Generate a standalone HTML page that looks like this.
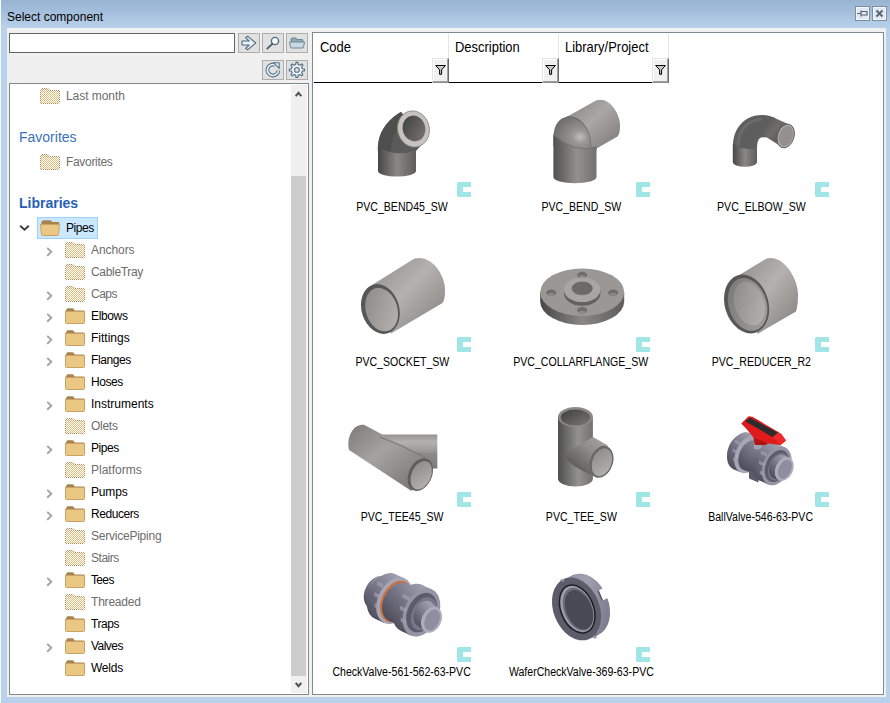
<!DOCTYPE html>
<html><head><meta charset="utf-8"><title>Select component</title>
<style>
html,body{margin:0;padding:0}
body{width:890px;height:703px;overflow:hidden;position:relative;background:#b9d1ea;font-family:"Liberation Sans",sans-serif;font-size:12px;color:#000}
.abs,.ic,.t,.h,.art,.lb,.sel{position:absolute}
#titlebar{position:absolute;left:0;top:0;width:890px;height:28px;background:linear-gradient(#99b4d1,#a3bddc 40%,#b9d1ea)}
#edgeL{position:absolute;left:0;top:0;width:1px;height:703px;background:#f6f9fd}
#title{position:absolute;left:7px;top:10px;font-size:12px;line-height:15px;white-space:nowrap}
#content{position:absolute;left:7px;top:28px;width:879px;height:669px;background:#f0f0f0}
.tb{position:absolute;width:15px;height:15px;box-sizing:border-box;border:1px solid #7d8da3;background:#dfe9f5;box-shadow:inset 0 0 0 1px #f4f8fc}
#search{position:absolute;left:9px;top:33px;width:226px;height:20px;box-sizing:border-box;border:1px solid #646464;background:#fff}
.btn{position:absolute;width:22px;height:20px;box-sizing:border-box;border:1px solid #adadad;background:#e1e1e1}
#tree{position:absolute;left:9px;top:83px;width:300px;height:612px;box-sizing:border-box;border:1px solid #828790;background:#fff}
#sb{position:absolute;left:291px;top:85px;width:16px;height:608px;background:#f0f0f0}
#thumb{position:absolute;left:291px;top:176px;width:15px;height:500px;background:#cdcdcd}
#right{position:absolute;left:312px;top:32px;width:572px;height:663px;box-sizing:border-box;border:1px solid #828790;background:#fff}
.t{font-size:12px;line-height:16px;white-space:nowrap}
.g{color:#6d6d6d}
.h{font-size:14px;line-height:20px;color:#3a72b8;white-space:nowrap}
.b{font-weight:bold;color:#2560b4}
.sel{left:37px;top:217px;width:61px;height:22px;box-sizing:border-box;border:1px solid #99d1ff;background:#cce8ff}
.hd{position:absolute;top:38px;font-size:14px;line-height:18px;white-space:nowrap;transform:scaleX(.925);transform-origin:0 50%}
.vs{position:absolute;top:34px;width:1px;height:24px;background:#e5e5e5}
.fb{position:absolute;top:58px;width:17px;height:25px;box-sizing:border-box;background:#f0f0f0;border:1px solid;border-color:#e3e3e3 #696969 #8a8a8a #e3e3e3;box-shadow:inset -1px -1px 0 #a0a0a0,inset 1px 1px 0 #fff}
.art{width:120px;height:88px}
.lb{width:200px;text-align:center;font-size:12px;line-height:16px;white-space:nowrap}
.lb span{display:inline-block;transform:scaleX(.88);transform-origin:50% 50%}
</style></head><body>
<svg width="0" height="0" style="position:absolute">
<defs>
<pattern id="dot" width="2" height="2" patternUnits="userSpaceOnUse"><rect width="2" height="2" fill="#fff"/><rect width="1" height="1" fill="#e4bf7d"/><rect x="1" y="1" width="1" height="1" fill="#e4bf7d"/></pattern>
<pattern id="dotb" width="2" height="2" patternUnits="userSpaceOnUse"><rect width="2" height="2" fill="#fff"/><rect width="1" height="1" fill="#cfa86c"/><rect x="1" y="1" width="1" height="1" fill="#cfa86c"/></pattern>
<pattern id="dotk" width="2" height="2" patternUnits="userSpaceOnUse"><rect width="2" height="2" fill="#fff"/><rect width="1" height="1" fill="#a8834f"/><rect x="1" y="1" width="1" height="1" fill="#a8834f"/></pattern>
<g id="fo"><path d="M0.5 4V3L2.300 0.300H8L9.800 2.500H18.500Q19.500 2.500 19.500 3.500V4Z" fill="#a8834f"/><path d="M0.5 3.5H19.5V14.5Q19.5 15.5 18.5 15.5H1.5Q.5 15.5 .5 14.5Z" fill="#eac782" stroke="#c9a166" stroke-width="1"/></g>
<g id="fd"><path d="M0.5 4V3L2.300 0.300H8L9.800 2.500H18.500Q19.500 2.500 19.500 3.500V4Z" fill="url(#dotb)"/><path d="M0.5 3.5H19.5V14.5Q19.5 15.5 18.5 15.5H1.5Q.5 15.5 .5 14.5Z" fill="url(#dot)"/><path d="M0.500 3L2.300 0.500H8L9.800 2.500H18.500Q19.500 2.500 19.500 3.500V14.500Q19.500 15.500 18.500 15.500H1.500Q.500 15.500 .500 14.500Z" fill="none" stroke="url(#dotk)" stroke-width="1"/></g>
<g id="fop"><path d="M1.300 4.500V2L3.200 0.300H10.400L12.500 2H18.700Q19.300 2 19.300 2.600V4.500Z" fill="#a8834f"/><path d="M0.5 4.5H19.5L18.5 14.5Q18.4 15.5 17.5 15.5H2.5Q1.6 15.5 1.5 14.5Z" fill="#eac782" stroke="#c9a166" stroke-width="1"/></g>
</defs></svg>
<div id="titlebar"></div><div id="edgeL"></div>
<div id="title">Select component</div>
<div class="tb" style="left:855px;top:6px"><svg width="13" height="13" style="position:absolute;left:0;top:0"><path d="M1 6.5H5M5 3.5V9.5M5 4.5H11V8H5" fill="none" stroke="#5a6572" stroke-width="1.2"/></svg></div>
<div class="tb" style="left:872px;top:6px"><svg width="13" height="13" style="position:absolute;left:0;top:0"><path d="M3.5 3.5L9.5 9.5M9.5 3.5L3.5 9.5" fill="none" stroke="#5a6572" stroke-width="2"/></svg></div>
<div id="content"></div>
<div id="search"></div>
<div class="btn" style="left:238px;top:33px"><svg width="20" height="18" style="position:absolute;left:0;top:0"><path d="M3 7H10.200L6.600 3.700L8.600 2.200L16.800 9L8.600 15.800L6.600 14.300L10.200 11H3Z" fill="#e9f1f7" stroke="#4a6a80" stroke-width="1.100" stroke-linejoin="round"/></svg></div>
<div class="btn" style="left:262px;top:33px"><svg width="20" height="18" style="position:absolute;left:0;top:0"><circle cx="12" cy="7" r="3.6" fill="#f4f8fb" stroke="#4f6f85" stroke-width="1.4"/><path d="M9.3 9.8L4.3 14.6" stroke="#4a5a66" stroke-width="1.8" stroke-linecap="round"/></svg></div>
<div class="btn" style="left:286px;top:33px"><svg width="20" height="18" style="position:absolute;left:0;top:0"><path d="M4 8V5Q4 4 5 4H9L10.5 5.5H15Q16 5.500 16 6.500V8" fill="#8fa7b5" stroke="#6d8797" stroke-width="1"/><path d="M2.500 8H17.500L16.500 13Q16.300 14 15.300 14H4.700Q3.700 14 3.500 13Z" fill="#c9d8e1" stroke="#6d8797" stroke-width="1"/></svg></div>
<div class="btn" style="left:262px;top:60px"><svg width="20" height="18" style="position:absolute;left:0;top:0"><path d="M15.400 9.500A5.500 5.500 0 1 1 12.200 4" fill="none" stroke="#56758a" stroke-width="3.800"/><path d="M15.400 9.500A5.500 5.500 0 1 1 12.200 4" fill="none" stroke="#e6eef4" stroke-width="1.700"/><path d="M10.800 1.800H16.200V7.400Z" fill="#e6eef4" stroke="#56758a" stroke-width="1.100" stroke-linejoin="round"/></svg></div>
<div class="btn" style="left:286px;top:60px"><svg width="20" height="18" style="position:absolute;left:0;top:0"><path d="M15.38 7.75L17.44 7.93L17.44 9.87L15.38 10.05L14.59 11.97L15.91 13.55L14.55 14.91L12.97 13.59L11.05 14.38L10.87 16.44L8.93 16.44L8.75 14.38L6.83 13.59L5.25 14.91L3.89 13.55L5.21 11.97L4.42 10.05L2.36 9.87L2.36 7.93L4.42 7.75L5.21 5.83L3.89 4.25L5.25 2.89L6.83 4.21L8.75 3.42L8.93 1.36L10.87 1.36L11.05 3.42L12.97 4.21L14.55 2.89L15.91 4.25L14.59 5.83Z" fill="#eef3f7" stroke="#4f6c80" stroke-width="1.1" stroke-linejoin="round"/><circle cx="9.9" cy="8.9" r="2.400" fill="#e1e1e1" stroke="#4f6c80" stroke-width="1.1"/></svg></div>
<div id="tree"></div>
<div id="sb"></div><div id="thumb"></div>
<svg class="ic" style="left:294px;top:90px" width="10" height="8"><path d="M1.700 6.100L4.500 2.900L7.300 6.100" fill="none" stroke="#505050" stroke-width="2.100"/></svg>
<svg class="ic" style="left:294px;top:681px" width="10" height="8"><path d="M1.700 1.900L4.500 5.100L7.300 1.900" fill="none" stroke="#505050" stroke-width="2.100"/></svg>
<svg class="ic" style="left:40px;top:88px" width="20" height="16"><use href="#fd"/></svg><span class="t g" style="left:66px;top:88px;letter-spacing:-0.05px">Last month</span>
<span class="h" style="left:19px;top:127px">Favorites</span>
<svg class="ic" style="left:40px;top:154px" width="20" height="16"><use href="#fd"/></svg><span class="t g" style="left:66px;top:154px;letter-spacing:-0.32px">Favorites</span>
<span class="h b" style="left:19px;top:193px">Libraries</span>
<div class="sel"></div>
<svg class="ic" style="left:19px;top:224px" width="11" height="8"><path d="M1.2 1.8 L5.5 5.700 L9.8 1.8" fill="none" stroke="#3c3c3c" stroke-width="1.9"/></svg>
<svg class="ic" style="left:40px;top:220px" width="20" height="16"><use href="#fop"/></svg>
<span class="t" style="left:66px;top:220px;letter-spacing:-0.42px">Pipes</span>
<svg class="ic" style="left:46px;top:246px" width="8" height="11"><path d="M1.2 1.9 L5.3 5.8 L1.2 9.7" fill="none" stroke="#a3a3a3" stroke-width="1.9"/></svg>
<svg class="ic" style="left:65px;top:242px" width="20" height="16"><use href="#fd"/></svg>
<span class="t g" style="left:91px;top:242px;letter-spacing:-0.07px">Anchors</span>
<svg class="ic" style="left:65px;top:264px" width="20" height="16"><use href="#fd"/></svg>
<span class="t g" style="left:91px;top:264px;letter-spacing:-0.32px">CableTray</span>
<svg class="ic" style="left:46px;top:290px" width="8" height="11"><path d="M1.2 1.9 L5.3 5.8 L1.2 9.7" fill="none" stroke="#a3a3a3" stroke-width="1.9"/></svg>
<svg class="ic" style="left:65px;top:286px" width="20" height="16"><use href="#fd"/></svg>
<span class="t g" style="left:91px;top:286px;letter-spacing:-0.50px">Caps</span>
<svg class="ic" style="left:46px;top:312px" width="8" height="11"><path d="M1.2 1.9 L5.3 5.8 L1.2 9.7" fill="none" stroke="#a3a3a3" stroke-width="1.9"/></svg>
<svg class="ic" style="left:65px;top:308px" width="20" height="16"><use href="#fo"/></svg>
<span class="t" style="left:91px;top:308px;letter-spacing:-0.35px">Elbows</span>
<svg class="ic" style="left:46px;top:334px" width="8" height="11"><path d="M1.2 1.9 L5.3 5.8 L1.2 9.7" fill="none" stroke="#a3a3a3" stroke-width="1.9"/></svg>
<svg class="ic" style="left:65px;top:330px" width="20" height="16"><use href="#fo"/></svg>
<span class="t" style="left:91px;top:330px">Fittings</span>
<svg class="ic" style="left:46px;top:356px" width="8" height="11"><path d="M1.2 1.9 L5.3 5.8 L1.2 9.7" fill="none" stroke="#a3a3a3" stroke-width="1.9"/></svg>
<svg class="ic" style="left:65px;top:352px" width="20" height="16"><use href="#fo"/></svg>
<span class="t" style="left:91px;top:352px;letter-spacing:-0.39px">Flanges</span>
<svg class="ic" style="left:65px;top:374px" width="20" height="16"><use href="#fo"/></svg>
<span class="t" style="left:91px;top:374px;letter-spacing:-0.42px">Hoses</span>
<svg class="ic" style="left:46px;top:400px" width="8" height="11"><path d="M1.2 1.9 L5.3 5.8 L1.2 9.7" fill="none" stroke="#a3a3a3" stroke-width="1.9"/></svg>
<svg class="ic" style="left:65px;top:396px" width="20" height="16"><use href="#fo"/></svg>
<span class="t" style="left:91px;top:396px">Instruments</span>
<svg class="ic" style="left:65px;top:418px" width="20" height="16"><use href="#fd"/></svg>
<span class="t g" style="left:91px;top:418px;letter-spacing:-0.28px">Olets</span>
<svg class="ic" style="left:46px;top:444px" width="8" height="11"><path d="M1.2 1.9 L5.3 5.8 L1.2 9.7" fill="none" stroke="#a3a3a3" stroke-width="1.9"/></svg>
<svg class="ic" style="left:65px;top:440px" width="20" height="16"><use href="#fo"/></svg>
<span class="t" style="left:91px;top:440px;letter-spacing:-0.42px">Pipes</span>
<svg class="ic" style="left:65px;top:462px" width="20" height="16"><use href="#fd"/></svg>
<span class="t g" style="left:91px;top:462px">Platforms</span>
<svg class="ic" style="left:46px;top:488px" width="8" height="11"><path d="M1.2 1.9 L5.3 5.8 L1.2 9.7" fill="none" stroke="#a3a3a3" stroke-width="1.9"/></svg>
<svg class="ic" style="left:65px;top:484px" width="20" height="16"><use href="#fo"/></svg>
<span class="t" style="left:91px;top:484px;letter-spacing:-0.16px">Pumps</span>
<svg class="ic" style="left:46px;top:510px" width="8" height="11"><path d="M1.2 1.9 L5.3 5.8 L1.2 9.7" fill="none" stroke="#a3a3a3" stroke-width="1.9"/></svg>
<svg class="ic" style="left:65px;top:506px" width="20" height="16"><use href="#fo"/></svg>
<span class="t" style="left:91px;top:506px;letter-spacing:-0.44px">Reducers</span>
<svg class="ic" style="left:65px;top:528px" width="20" height="16"><use href="#fd"/></svg>
<span class="t g" style="left:91px;top:528px;letter-spacing:-0.23px">ServicePiping</span>
<svg class="ic" style="left:65px;top:550px" width="20" height="16"><use href="#fd"/></svg>
<span class="t g" style="left:91px;top:550px;letter-spacing:-0.47px">Stairs</span>
<svg class="ic" style="left:46px;top:576px" width="8" height="11"><path d="M1.2 1.9 L5.3 5.8 L1.2 9.7" fill="none" stroke="#a3a3a3" stroke-width="1.9"/></svg>
<svg class="ic" style="left:65px;top:572px" width="20" height="16"><use href="#fo"/></svg>
<span class="t" style="left:91px;top:572px;letter-spacing:-0.65px">Tees</span>
<svg class="ic" style="left:65px;top:594px" width="20" height="16"><use href="#fd"/></svg>
<span class="t g" style="left:91px;top:594px;letter-spacing:-0.20px">Threaded</span>
<svg class="ic" style="left:65px;top:616px" width="20" height="16"><use href="#fo"/></svg>
<span class="t" style="left:91px;top:616px;letter-spacing:-0.46px">Traps</span>
<svg class="ic" style="left:46px;top:642px" width="8" height="11"><path d="M1.2 1.9 L5.3 5.8 L1.2 9.7" fill="none" stroke="#a3a3a3" stroke-width="1.9"/></svg>
<svg class="ic" style="left:65px;top:638px" width="20" height="16"><use href="#fo"/></svg>
<span class="t" style="left:91px;top:638px;letter-spacing:-0.53px">Valves</span>
<svg class="ic" style="left:65px;top:660px" width="20" height="16"><use href="#fo"/></svg>
<span class="t" style="left:91px;top:660px;letter-spacing:-0.24px">Welds</span>
<div id="right"></div>
<div class="abs" style="left:314px;top:82px;width:355px;height:1px;background:#000"></div>
<span class="hd" style="left:320px">Code</span>
<span class="hd" style="left:455px">Description</span>
<span class="hd" style="left:565px">Library/Project</span>
<div class="vs" style="left:448px"></div><div class="vs" style="left:558px"></div><div class="vs" style="left:668px"></div>
<div class="fb" style="left:432px"><svg width="15" height="23" style="position:absolute;left:0;top:0"><path d="M2.700 6.500H12.400L8.600 10.800V15.300H6.600V10.800Z" fill="#c8c8c8" stroke="#000" stroke-width="1"/></svg></div>
<div class="fb" style="left:542px"><svg width="15" height="23" style="position:absolute;left:0;top:0"><path d="M2.700 6.500H12.400L8.600 10.800V15.300H6.600V10.800Z" fill="#c8c8c8" stroke="#000" stroke-width="1"/></svg></div>
<div class="fb" style="left:652px"><svg width="15" height="23" style="position:absolute;left:0;top:0"><path d="M2.700 6.500H12.400L8.600 10.800V15.300H6.600V10.800Z" fill="#c8c8c8" stroke="#000" stroke-width="1"/></svg></div>
<svg class="abs" style="left:0;top:0" width="890" height="703" viewBox="0 0 890 703">
<defs>
<linearGradient id="cylD" x1="0" x2="1" y1="0" y2="0"><stop offset="0" stop-color="#474747"/><stop offset=".5" stop-color="#8a8785"/><stop offset="1" stop-color="#5e5d5c"/></linearGradient>
<linearGradient id="cylM" x1="0" x2="1" y1="0" y2="0"><stop offset="0" stop-color="#525150"/><stop offset=".55" stop-color="#93908d"/><stop offset="1" stop-color="#747270"/></linearGradient><linearGradient id="diagL2" x1="0" x2="1" y1="0" y2="1"><stop offset="0" stop-color="#858280"/><stop offset=".45" stop-color="#aaa7a4"/><stop offset="1" stop-color="#7a7775"/></linearGradient>
<linearGradient id="diagL" x1="0" x2="1" y1="0" y2="1"><stop offset="0" stop-color="#8f8c8a"/><stop offset=".45" stop-color="#b4b1ae"/><stop offset="1" stop-color="#7f7d7b"/></linearGradient>
<linearGradient id="diagM" x1="0" x2="1" y1="0" y2="1"><stop offset="0" stop-color="#7d7b79"/><stop offset=".4" stop-color="#a5a29f"/><stop offset="1" stop-color="#6e6c6a"/></linearGradient>
<linearGradient id="holeD" x1="0" x2="1" y1="0" y2="1"><stop offset="0" stop-color="#3e3e3e"/><stop offset="1" stop-color="#7a7876"/></linearGradient>
<linearGradient id="holeL" x1="0" x2="1" y1="0" y2="1"><stop offset="0" stop-color="#8a8785"/><stop offset="1" stop-color="#b8b5b2"/></linearGradient>
<radialGradient id="sph" cx=".62" cy=".55" r=".7"><stop offset="0" stop-color="#c2bfbc"/><stop offset=".25" stop-color="#999693"/><stop offset="1" stop-color="#686664"/></radialGradient>
<linearGradient id="bv" x1="0" x2="1" y1="0" y2="1"><stop offset="0" stop-color="#9292a2"/><stop offset=".5" stop-color="#767686"/><stop offset="1" stop-color="#565664"/></linearGradient>
<linearGradient id="bv2" x1="0" x2="0" y1="0" y2="1"><stop offset="0" stop-color="#9a9aaa"/><stop offset=".5" stop-color="#737383"/><stop offset="1" stop-color="#545461"/></linearGradient>
<linearGradient id="brH" x1="0" x2="0" y1="0" y2="1"><stop offset="0" stop-color="#969390"/><stop offset=".22" stop-color="#b4b1ae"/><stop offset=".5" stop-color="#9a9794"/><stop offset=".55" stop-color="#8d8a87"/><stop offset="1" stop-color="#7d7b78"/></linearGradient>
<linearGradient id="brT" x1="1" x2="0" y1="0" y2="1"><stop offset="0" stop-color="#a9a6a3"/><stop offset=".35" stop-color="#918e8b"/><stop offset=".8" stop-color="#595857"/><stop offset="1" stop-color="#4e4d4d"/></linearGradient>
<linearGradient id="cylDD" x1="0" x2="1" y1="0" y2="0"><stop offset="0" stop-color="#4e4e4e"/><stop offset=".58" stop-color="#94918e"/><stop offset="1" stop-color="#747270"/></linearGradient>
<linearGradient id="band" x1="0" x2="1" y1="0" y2="1"><stop offset="0" stop-color="#777573"/><stop offset="1" stop-color="#a5a29f"/></linearGradient>
</defs>
<!-- 1: PVC_BEND45_SW -->
<g>
<path d="M378 152C377 133 387 120 401 112L425 141L416 151V160H378Z" fill="#5a5a5a"/>
<path d="M378 152C377 133 387 120 401 112L408 120C396 127 390 140 391 155Z" fill="#4e4e4e"/>
<path d="M378 147Q397 158 416 150V171A19 5.600 0 0 1 378 171Z" fill="url(#cylD)"/>
<ellipse cx="413.500" cy="129" rx="15.800" ry="18.200" transform="rotate(-14 413.500 129)" fill="#c6c2be" stroke="#8a8683" stroke-width=".8"/>
<ellipse cx="414" cy="128.500" rx="11.300" ry="13" transform="rotate(-14 414 128.500)" fill="url(#holeD)"/>
</g>
<!-- 2: PVC_BEND_SW -->
<g>
<path d="M584 141L596.500 147.500V150.500L584 153Z" fill="#8d8a88"/>
<path d="M566.500 117L596 100.500C608 96 620 112 620 126C620 131 619 135 617.500 136.500L596.500 148.500L575 140Z" fill="url(#diagL2)"/>
<path d="M553.400 138C553.400 124 560 117.500 568 116.500C582 115 592 130 590.500 147L596.500 148.500V150L575 154L553.400 146Z" fill="url(#sph)"/>
<path d="M553.400 135Q575 154 596.500 147V177A21.550 6.200 0 0 1 553.400 177Z" fill="url(#cylM)"/>
<path d="M567 116.500C582 117 591.500 131 590.500 147" fill="none" stroke="#6a6866" stroke-width=".7"/>
<path d="M553.400 135Q575 154 596.500 147" fill="none" stroke="#6a6866" stroke-width=".7"/>
</g>
<!-- 3: PVC_ELBOW_SW -->
<g>
<path d="M733 146C733 128 745 115 762 115C768 115 772 116.500 775 118L766 137.500C763 137 761 137.500 760 138C757.500 140 757 144 757 149L757 152H733Z" fill="#5f5e5e"/>
<path d="M738 146C738 130 748 120 762 119" fill="none" stroke="#7a7876" stroke-width="3" opacity=".5"/>
<path d="M732.800 144Q745 151.500 757 147.500V162A12.100 4.800 0 0 1 732.800 162Z" fill="url(#cylD)"/>
<path d="M766 137C762 128 766 119 772.500 117L789 124.500L783 147.500Z" fill="url(#diagM)"/>
<path d="M766 137C762 128 766 119 772.500 117L789 124.500L783 147.500Z" fill="#000" opacity=".33"/>
<ellipse cx="785.700" cy="136" rx="8.300" ry="12.200" transform="rotate(18 785.700 136)" fill="#adaaa7" stroke="#5a5958" stroke-width=".9"/>
<ellipse cx="785.900" cy="136" rx="6.700" ry="10.400" transform="rotate(18 785.900 136)" fill="#93908d"/>
</g>
<!-- 4: PVC_SOCKET_SW -->
<g>
<path d="M380 309L372 285L414.500 258.500C432 254 446 276 445 291C445 297 444 301 442.500 303L391 333.500Z" fill="url(#diagL)"/>
<ellipse cx="380.400" cy="309" rx="18.800" ry="25.400" transform="rotate(-17 380.400 309)" fill="#585756"/>
<ellipse cx="381.600" cy="309.600" rx="15.800" ry="22.200" transform="rotate(-17 381.600 309.600)" fill="url(#holeL)"/>
</g>
<!-- 5: PVC_COLLARFLANGE_SW -->
<g>
<path d="M540.200 292.200V301.500A42 23.500 0 0 0 624.200 301.500V292.200Z" fill="url(#cylD)"/>
<ellipse cx="582.200" cy="292.200" rx="42" ry="23.800" fill="#9a9794"/>
<ellipse cx="582.200" cy="274.900" rx="5" ry="3.200" fill="#6f6d6a"/><ellipse cx="551.300" cy="292.700" rx="5" ry="3.200" fill="#6f6d6a"/><ellipse cx="613.200" cy="292.700" rx="5" ry="3.200" fill="#6f6d6a"/><ellipse cx="582.200" cy="310.300" rx="5" ry="3.200" fill="#6f6d6a"/>
<ellipse cx="582.200" cy="276.600" rx="3.200" ry="1.300" fill="#8d8a87"/><ellipse cx="551.300" cy="294.400" rx="3.200" ry="1.300" fill="#8d8a87"/><ellipse cx="613.200" cy="294.400" rx="3.200" ry="1.300" fill="#8d8a87"/><ellipse cx="582.200" cy="312" rx="3.200" ry="1.300" fill="#8d8a87"/>
<path d="M564 290V293.500A18.200 12.200 0 0 0 600.400 293.500V290Z" fill="#64625f"/>
<ellipse cx="582.200" cy="289.700" rx="18.200" ry="12.300" fill="#a8a5a2"/>
<ellipse cx="582.200" cy="288.300" rx="10.500" ry="6.900" fill="#6c6a67"/>
<path d="M572.500 290.500A10 6 0 0 0 592 290.500A10.500 6.900 0 0 1 572.500 290.500Z" fill="#8f8c89"/>
</g>
<!-- 6: PVC_REDUCER_R2 -->
<g>
<path d="M746 304L738.500 275.500L766.500 258.500C784 254 799 280 798 296C798 303 797 308 796 311.500L757.500 334Z" fill="url(#diagL)"/>
<ellipse cx="746.600" cy="304" rx="21.800" ry="30" transform="rotate(-17 746.600 304)" fill="#585756"/>
<ellipse cx="747.600" cy="304.400" rx="19" ry="27" transform="rotate(-17 747.600 304.400)" fill="url(#band)"/>
<ellipse cx="749.400" cy="303.500" rx="14.800" ry="22.400" transform="rotate(-17 749.400 303.500)" fill="url(#holeL)"/>
</g>
<!-- 7: PVC_TEE45_SW -->
<g>
<path d="M379.500 434.400H437.300V468.600H420L379.500 440Z" fill="url(#brH)"/>
<path d="M364.500 425C352 423 346 440 349 450L411.500 491L431 462L426 458Z" fill="url(#diagM)"/>
<path d="M379.700 437Q402 445 426 458" fill="none" stroke="#6e6c6a" stroke-width=".8"/>
<ellipse cx="420.300" cy="474.600" rx="11.600" ry="17" transform="rotate(24 420.300 474.600)" fill="#5e5d5c"/>
<ellipse cx="421.200" cy="475.200" rx="9.700" ry="15" transform="rotate(24 421.200 475.200)" fill="url(#holeL)"/>
</g>
<!-- 8: PVC_TEE_SW -->
<g>
<path d="M558 417V478.800A17.450 7.800 0 0 0 592.900 478.800V417Z" fill="url(#cylDD)"/>
<ellipse cx="575.450" cy="417" rx="17.450" ry="10" fill="#8c8986"/>
<ellipse cx="575.450" cy="417.600" rx="14.800" ry="8" fill="url(#holeD)"/>
<path d="M563 454.600L592.900 436.900L608 445.500L597 477L592 475Q572 468 563 454.600Z" fill="url(#brT)"/>
<ellipse cx="601.400" cy="461.800" rx="11.400" ry="16.400" transform="rotate(20 601.400 461.800)" fill="#6a6866"/>
<ellipse cx="601.900" cy="462.200" rx="9.600" ry="14.400" transform="rotate(20 601.900 462.200)" fill="url(#holeL)"/>
</g>
<!-- 9: BallValve -->
<g><linearGradient id="vg1" gradientUnits="userSpaceOnUse" x1="745.9" y1="437.0" x2="733.6" y2="463.3"><stop offset="0" stop-color="#a2a2b3"/><stop offset="0.3" stop-color="#8a8a9b"/><stop offset="0.65" stop-color="#6a6a7a"/><stop offset="1" stop-color="#4e4e5b"/></linearGradient><ellipse cx="738.0" cy="449.3" rx="9.6" ry="14.5" transform="rotate(25 738.0 449.3)" fill="url(#vg1)" /><path d="M744.1 436.2L747.6 437.9L735.4 464.1L731.9 462.4Z" fill="url(#vg1)"/><ellipse cx="741.5" cy="451.0" rx="9.6" ry="14.5" transform="rotate(25 741.5 451.0)" fill="url(#vg1)" /><linearGradient id="vg2" gradientUnits="userSpaceOnUse" x1="753.5" y1="434.8" x2="736.8" y2="470.6"><stop offset="0" stop-color="#a2a2b3"/><stop offset="0.3" stop-color="#8a8a9b"/><stop offset="0.65" stop-color="#6a6a7a"/><stop offset="1" stop-color="#4e4e5b"/></linearGradient><ellipse cx="741.5" cy="451.0" rx="13.1" ry="19.8" transform="rotate(25 741.5 451.0)" fill="url(#vg2)" /><path d="M749.9 433.1L757.2 436.5L740.4 472.3L733.1 468.9Z" fill="url(#vg2)"/><ellipse cx="748.8" cy="454.4" rx="13.1" ry="19.8" transform="rotate(25 748.8 454.4)" fill="#a6a6b7" /><path d="M734.6 439.4l5.4 2.5v3.4l-5.4 -2.5Z" fill="#a0a0b2" opacity=".7"/><path d="M732.7 448.4l5.4 2.5v3.4l-5.4 -2.5Z" fill="#a0a0b2" opacity=".7"/><path d="M733.1 457.4l5.4 2.5v3.4l-5.4 -2.5Z" fill="#a0a0b2" opacity=".7"/><linearGradient id="vg3" gradientUnits="userSpaceOnUse" x1="765.8" y1="444.1" x2="752.2" y2="473.2"><stop offset="0" stop-color="#8c8c9d"/><stop offset="0.4" stop-color="#747485"/><stop offset="1" stop-color="#4c4c59"/></linearGradient><ellipse cx="750.0" cy="455.3" rx="10.6" ry="16.0" transform="rotate(25 750.0 455.3)" fill="url(#vg3)" /><path d="M756.8 440.8L774.8 447.5L761.2 476.5L743.2 469.8Z" fill="url(#vg3)"/><ellipse cx="768.0" cy="462.0" rx="10.6" ry="16.0" transform="rotate(25 768.0 462.0)" fill="url(#vg3)" /><path d="M749 470L758.500 474V482.500L749 478.500Z" fill="#5a5a68"/><path d="M754 440H761.500V448.500Q757.700 450.500 754 448.500Z" fill="#a3a3b4"/><linearGradient id="vg4" gradientUnits="userSpaceOnUse" x1="780.8" y1="445.5" x2="763.6" y2="482.3"><stop offset="0" stop-color="#a2a2b3"/><stop offset="0.3" stop-color="#8a8a9b"/><stop offset="0.65" stop-color="#6a6a7a"/><stop offset="1" stop-color="#4e4e5b"/></linearGradient><ellipse cx="767.7" cy="461.8" rx="13.4" ry="20.3" transform="rotate(25 767.7 461.8)" fill="url(#vg4)" /><path d="M776.3 443.4L785.3 447.6L768.1 484.4L759.1 480.2Z" fill="url(#vg4)"/><ellipse cx="776.7" cy="466.0" rx="13.4" ry="20.3" transform="rotate(25 776.7 466.0)" fill="#9494a5" /><path d="M760.9 450.4l6.3 3.0v3.5l-6.3 -3.0Z" fill="#a0a0b2" opacity=".7"/><path d="M759.0 460.4l6.3 3.0v3.5l-6.3 -3.0Z" fill="#a0a0b2" opacity=".7"/><path d="M759.8 470.4l6.3 3.0v3.5l-6.3 -3.0Z" fill="#a0a0b2" opacity=".7"/><ellipse cx="776.9" cy="466.1" rx="11.1" ry="16.8" transform="rotate(25 776.9 466.1)" fill="#5b5b69" /><ellipse cx="778.5" cy="466.8" rx="9.6" ry="14.5" transform="rotate(25 778.5 466.8)" fill="#77778a" /><linearGradient id="vg5" gradientUnits="userSpaceOnUse" x1="786.6" y1="456.7" x2="776.2" y2="479.1"><stop offset="0" stop-color="#a2a2b3"/><stop offset="0.3" stop-color="#8a8a9b"/><stop offset="0.65" stop-color="#6a6a7a"/><stop offset="1" stop-color="#4e4e5b"/></linearGradient><ellipse cx="778.5" cy="466.8" rx="8.7" ry="12.4" transform="rotate(25 778.5 466.8)" fill="url(#vg5)" /><path d="M783.7 455.6L789.5 457.8L779.1 480.2L773.3 478.0Z" fill="url(#vg5)"/><ellipse cx="784.3" cy="469.0" rx="8.7" ry="12.4" transform="rotate(25 784.3 469.0)" fill="#adadbe" /><ellipse cx="784.9" cy="469.2" rx="6.2" ry="10.0" transform="rotate(25 784.9 469.2)" fill="#8e8e9f" /><path d="M741.300 423.500L748.500 416.200L752.500 416.800L776.500 431L781.200 434L786 440.500L780.500 445L768 443.500L765 445H755L753.500 437.500L746.500 429Z" fill="#e01b1b"/><path d="M755 445L753.500 437.500L768 443.500L765 445Z" fill="#b01515"/><path d="M776.500 431L781.200 434L786 440.500L780.500 445L773 437Z" fill="#ee2a2a"/><path d="M745.200 421.300L750 417.800L778 432.800L772.500 437Z" fill="#2c2c2e"/></g>
<!-- 10: CheckValve -->
<g><linearGradient id="vg6" gradientUnits="userSpaceOnUse" x1="385.9" y1="578.0" x2="371.6" y2="608.8"><stop offset="0" stop-color="#a2a2b3"/><stop offset="0.3" stop-color="#8a8a9b"/><stop offset="0.65" stop-color="#6a6a7a"/><stop offset="1" stop-color="#4e4e5b"/></linearGradient><ellipse cx="376.5" cy="592.3" rx="11.6" ry="17.0" transform="rotate(25 376.5 592.3)" fill="url(#vg6)" /><path d="M383.7 576.9L388.2 579.1L373.8 609.9L369.3 607.7Z" fill="url(#vg6)"/><ellipse cx="381.0" cy="594.5" rx="11.6" ry="17.0" transform="rotate(25 381.0 594.5)" fill="url(#vg6)" /><linearGradient id="vg7" gradientUnits="userSpaceOnUse" x1="400.1" y1="576.3" x2="379.4" y2="620.8"><stop offset="0" stop-color="#a2a2b3"/><stop offset="0.3" stop-color="#8a8a9b"/><stop offset="0.65" stop-color="#6a6a7a"/><stop offset="1" stop-color="#4e4e5b"/></linearGradient><ellipse cx="385.0" cy="596.4" rx="16.7" ry="24.5" transform="rotate(25 385.0 596.4)" fill="url(#vg7)" /><path d="M395.4 574.2L404.9 578.5L384.1 622.9L374.6 618.6Z" fill="url(#vg7)"/><ellipse cx="394.5" cy="600.7" rx="16.7" ry="24.5" transform="rotate(25 394.5 600.7)" fill="#a6a6b7" /><path d="M377.1 581.1l6.3 3.0v4.2l-6.3 -3.0Z" fill="#a0a0b2" opacity=".7"/><path d="M374.3 592.1l6.3 3.0v4.2l-6.3 -3.0Z" fill="#a0a0b2" opacity=".7"/><path d="M374.5 603.1l6.3 3.0v4.2l-6.3 -3.0Z" fill="#a0a0b2" opacity=".7"/><ellipse cx="396.2" cy="601.5" rx="14.8" ry="21.8" transform="rotate(25 396.2 601.5)" fill="#d07038" /><linearGradient id="vg8" gradientUnits="userSpaceOnUse" x1="413.9" y1="586.6" x2="396.5" y2="624.0"><stop offset="0" stop-color="#8c8c9d"/><stop offset="0.4" stop-color="#747485"/><stop offset="1" stop-color="#4c4c59"/></linearGradient><ellipse cx="397.4" cy="602.1" rx="14.0" ry="20.6" transform="rotate(25 397.4 602.1)" fill="url(#vg8)" /><path d="M406.1 583.4L421.7 589.8L404.3 627.2L388.7 620.8Z" fill="url(#vg8)"/><ellipse cx="413.0" cy="608.5" rx="14.0" ry="20.6" transform="rotate(25 413.0 608.5)" fill="url(#vg8)" /><linearGradient id="vg9" gradientUnits="userSpaceOnUse" x1="427.1" y1="587.2" x2="405.7" y2="633.1"><stop offset="0" stop-color="#a2a2b3"/><stop offset="0.3" stop-color="#8a8a9b"/><stop offset="0.65" stop-color="#6a6a7a"/><stop offset="1" stop-color="#4e4e5b"/></linearGradient><ellipse cx="411.4" cy="607.8" rx="17.2" ry="25.3" transform="rotate(25 411.4 607.8)" fill="url(#vg9)" /><path d="M422.1 584.9L432.1 589.6L410.7 635.4L400.7 630.7Z" fill="url(#vg9)"/><ellipse cx="421.4" cy="612.5" rx="17.2" ry="25.3" transform="rotate(25 421.4 612.5)" fill="#9494a5" /><path d="M402.4 593.5l7.3 3.4v4.3l-7.3 -3.4Z" fill="#a0a0b2" opacity=".7"/><path d="M400.0 605.5l7.3 3.4v4.3l-7.3 -3.4Z" fill="#a0a0b2" opacity=".7"/><path d="M400.7 617.5l7.3 3.4v4.3l-7.3 -3.4Z" fill="#a0a0b2" opacity=".7"/><ellipse cx="421.6" cy="612.6" rx="14.1" ry="20.8" transform="rotate(25 421.6 612.6)" fill="#5b5b69" /><ellipse cx="424.0" cy="613.8" rx="11.9" ry="17.5" transform="rotate(25 424.0 613.8)" fill="#77778a" /><linearGradient id="vg10" gradientUnits="userSpaceOnUse" x1="433.5" y1="604.5" x2="422.0" y2="629.1"><stop offset="0" stop-color="#a2a2b3"/><stop offset="0.3" stop-color="#8a8a9b"/><stop offset="0.65" stop-color="#6a6a7a"/><stop offset="1" stop-color="#4e4e5b"/></linearGradient><ellipse cx="424.0" cy="613.8" rx="9.8" ry="13.6" transform="rotate(25 424.0 613.8)" fill="url(#vg10)" /><path d="M429.7 601.5L437.2 607.5L425.8 632.1L418.3 626.1Z" fill="url(#vg10)"/><ellipse cx="431.5" cy="619.8" rx="9.8" ry="13.6" transform="rotate(25 431.5 619.8)" fill="#adadbe" /><ellipse cx="432.1" cy="620.0" rx="7.0" ry="11.0" transform="rotate(25 432.1 620.0)" fill="#8e8e9f" /></g>
<!-- 11: WaferCheckValve -->
<g>
<linearGradient id="rim" x1="0" x2="1" y1="0" y2="1"><stop offset="0" stop-color="#8a8a9c"/><stop offset=".45" stop-color="#a0a0b2"/><stop offset="1" stop-color="#6e6e7f"/></linearGradient>
<ellipse cx="585.500" cy="605" rx="23" ry="32.500" transform="rotate(-22 585.500 605)" fill="url(#rim)"/>
<path d="M564.300 578.900L573.300 574.900L597.800 635.100L588.800 639.100Z" fill="url(#rim)"/>
<path d="M598.500 590.500L603.500 588L607.800 598L602.500 600.500Z" fill="#fff"/>
<path d="M597.500 591L598.800 590.300L603 600.200L601.700 600.900Z" fill="#55556a"/>
<ellipse cx="576.500" cy="609" rx="23" ry="32.500" transform="rotate(-22 576.500 609)" fill="#5c5c6a"/>
<ellipse cx="562.300" cy="580.300" rx="2" ry="1.400" fill="#9a9aac"/><ellipse cx="594.700" cy="637.200" rx="2" ry="1.400" fill="#9a9aac"/>
<ellipse cx="577.200" cy="609" rx="16.300" ry="25" transform="rotate(-22 577.200 609)" fill="#9c9cad" stroke="#202024" stroke-width="1.600"/>
<ellipse cx="578.200" cy="609.200" rx="14" ry="22.300" transform="rotate(-22 578.200 609.200)" fill="#6a6a79"/>
<ellipse cx="579" cy="609.800" rx="12.800" ry="20.600" transform="rotate(-22 579 609.800)" fill="#4a4a56"/>
</g>
</svg>
<svg class="ic" style="left:457px;top:182px" width="14" height="15"><path d="M1 0H14V5H6V10H14V15H1L0 14V1Z" fill="#a0e6e6"/></svg>
<div class="lb" style="left:302px;top:199px"><span>PVC_BEND45_SW</span></div>
<svg class="ic" style="left:636px;top:182px" width="14" height="15"><path d="M1 0H14V5H6V10H14V15H1L0 14V1Z" fill="#a0e6e6"/></svg>
<div class="lb" style="left:481px;top:199px"><span>PVC_BEND_SW</span></div>
<svg class="ic" style="left:815px;top:182px" width="14" height="15"><path d="M1 0H14V5H6V10H14V15H1L0 14V1Z" fill="#a0e6e6"/></svg>
<div class="lb" style="left:661px;top:199px"><span>PVC_ELBOW_SW</span></div>
<svg class="ic" style="left:457px;top:337px" width="14" height="15"><path d="M1 0H14V5H6V10H14V15H1L0 14V1Z" fill="#a0e6e6"/></svg>
<div class="lb" style="left:302px;top:354px"><span>PVC_SOCKET_SW</span></div>
<svg class="ic" style="left:636px;top:337px" width="14" height="15"><path d="M1 0H14V5H6V10H14V15H1L0 14V1Z" fill="#a0e6e6"/></svg>
<div class="lb" style="left:481px;top:354px"><span>PVC_COLLARFLANGE_SW</span></div>
<svg class="ic" style="left:815px;top:337px" width="14" height="15"><path d="M1 0H14V5H6V10H14V15H1L0 14V1Z" fill="#a0e6e6"/></svg>
<div class="lb" style="left:661px;top:354px"><span>PVC_REDUCER_R2</span></div>
<svg class="ic" style="left:457px;top:492px" width="14" height="15"><path d="M1 0H14V5H6V10H14V15H1L0 14V1Z" fill="#a0e6e6"/></svg>
<div class="lb" style="left:302px;top:509px"><span>PVC_TEE45_SW</span></div>
<svg class="ic" style="left:636px;top:492px" width="14" height="15"><path d="M1 0H14V5H6V10H14V15H1L0 14V1Z" fill="#a0e6e6"/></svg>
<div class="lb" style="left:481px;top:509px"><span>PVC_TEE_SW</span></div>
<svg class="ic" style="left:815px;top:492px" width="14" height="15"><path d="M1 0H14V5H6V10H14V15H1L0 14V1Z" fill="#a0e6e6"/></svg>
<div class="lb" style="left:661px;top:509px"><span>BallValve-546-63-PVC</span></div>
<svg class="ic" style="left:457px;top:647px" width="14" height="15"><path d="M1 0H14V5H6V10H14V15H1L0 14V1Z" fill="#a0e6e6"/></svg>
<div class="lb" style="left:302px;top:664px"><span>CheckValve-561-562-63-PVC</span></div>
<svg class="ic" style="left:636px;top:647px" width="14" height="15"><path d="M1 0H14V5H6V10H14V15H1L0 14V1Z" fill="#a0e6e6"/></svg>
<div class="lb" style="left:481px;top:664px"><span>WaferCheckValve-369-63-PVC</span></div>
</body></html>
